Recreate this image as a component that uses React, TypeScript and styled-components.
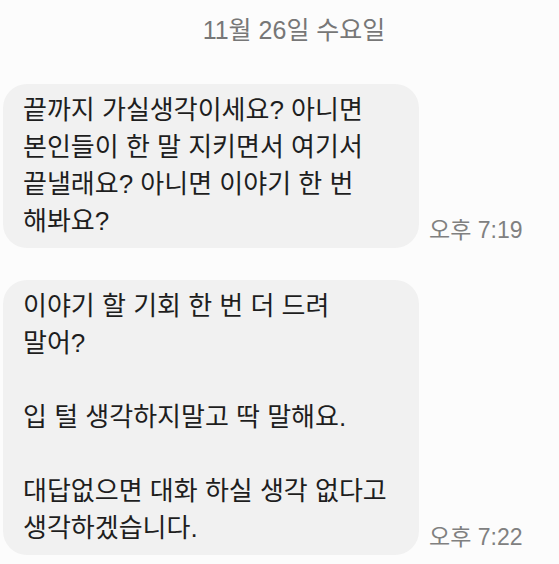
import styled, { createGlobalStyle } from "styled-components";

const GlobalStyle = createGlobalStyle`
  html, body {
    margin: 0;
    padding: 0;
    background: #fcfcfc;
  }
  body {
    font-family: "Liberation Sans", "Noto Sans CJK KR", sans-serif;
  }
`;

const Page = styled.div`
  width: 559px;
  height: 564px;
  overflow: hidden;
  padding: 14px 0 0 3px;
  box-sizing: border-box;
  display: flex;
  flex-direction: column;
`;

const DateRow = styled.div`
  display: flex;
  justify-content: center;
  padding-left: 26px;
  height: 70px;
  font-size: 25px;
  line-height: 33px;
  color: #777;
`;

const Thread = styled.div`
  display: flex;
  flex-direction: column;
  gap: 32px;
`;

const Row = styled.div`
  display: flex;
  align-items: flex-end;
  gap: 10px;
`;

const Bubble = styled.div`
  width: 416px;
  box-sizing: border-box;
  padding: 8px 20px;
  background: #f1f1f1;
  border-radius: 24px;
  color: #1e1e1e;
  font-size: 26px;
  line-height: 37px;
  white-space: pre-line;
`;

const Time = styled.span`
  font-size: 23px;
  line-height: 28px;
  color: #808080;
  padding-bottom: 4px;
`;

interface IMessage {
  id: number;
  text: string;
  time: string;
}

const messages: IMessage[] = [
  {
    id: 1,
    text: "끝까지 가실생각이세요? 아니면\n본인들이 한 말 지키면서 여기서\n끝낼래요? 아니면 이야기 한 번\n해봐요?",
    time: "오후 7:19",
  },
  {
    id: 2,
    text: "이야기 할 기회 한 번 더 드려\n말어?\n\n입 털 생각하지말고 딱 말해요.\n\n대답없으면 대화 하실 생각 없다고\n생각하겠습니다.",
    time: "오후 7:22",
  },
];

function App() {
  return (
    <>
      <GlobalStyle />
      <Page>
        <DateRow>11월 26일 수요일</DateRow>
        <Thread>
          {messages.map((msg) => (
            <Row key={msg.id}>
              <Bubble>{msg.text}</Bubble>
              <Time>{msg.time}</Time>
            </Row>
          ))}
        </Thread>
      </Page>
    </>
  );
}

export default App;
